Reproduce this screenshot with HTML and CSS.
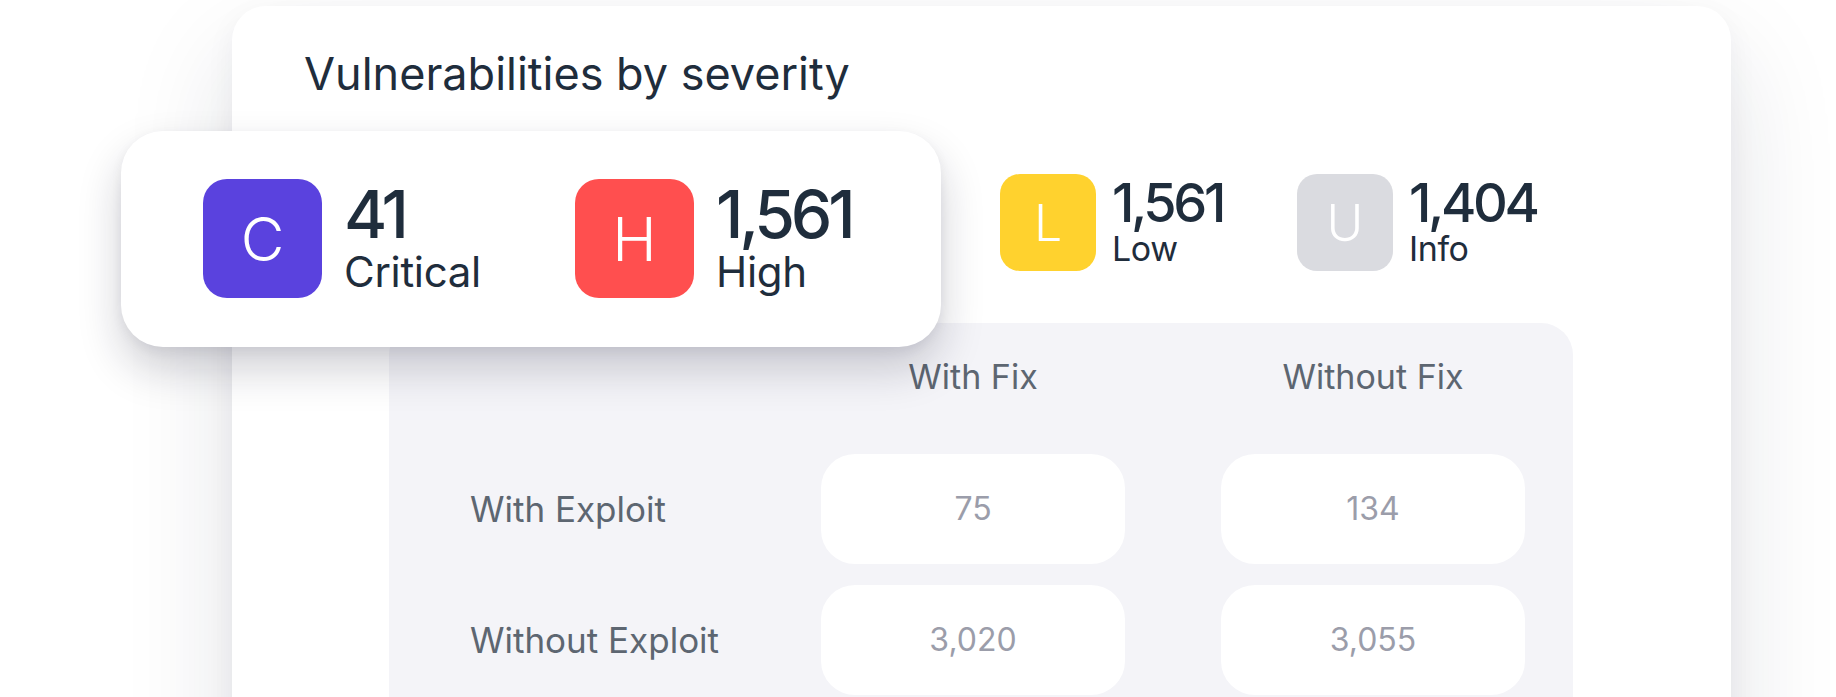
FILE: index.html
```html
<!DOCTYPE html>
<html lang="en">
<head>
<meta charset="utf-8">
<title>Vulnerabilities by severity</title>
<link rel="stylesheet" href="styles.css">
</head>
<body>
<main class="stage">
  <section class="card">
    <h1 class="title">Vulnerabilities by severity</h1>
    <div class="stats">
      <div class="stat stat--low">
        <span class="badge badge--low">L</span>
        <div class="stat__text"><span class="stat__num">1,561</span><span class="stat__label">Low</span></div>
      </div>
      <div class="stat">
        <span class="badge badge--info">U</span>
        <div class="stat__text"><span class="stat__num">1,404</span><span class="stat__label">Info</span></div>
      </div>
    </div>
    <div class="matrix">
      <span></span>
      <span class="matrix__head">With Fix</span>
      <span class="matrix__head">Without Fix</span>
      <span class="matrix__label">With Exploit</span>
      <span class="matrix__cell">75</span>
      <span class="matrix__cell">134</span>
      <span class="matrix__label">Without Exploit</span>
      <span class="matrix__cell">3,020</span>
      <span class="matrix__cell">3,055</span>
    </div>
  </section>
  <div class="zoom-card">
    <div class="stat stat--lg">
      <span class="badge badge--critical">C</span>
      <div class="stat__text"><span class="stat__num">41</span><span class="stat__label">Critical</span></div>
    </div>
    <div class="stat stat--lg">
      <span class="badge badge--high">H</span>
      <div class="stat__text"><span class="stat__num">1,561</span><span class="stat__label">High</span></div>
    </div>
  </div>
</main>
</body>
</html>
```

FILE: styles.css
```css
* { box-sizing: border-box; }

html, body {
  margin: 0;
  padding: 0;
  background: #ffffff;
}

body {
  width: 1836px;
  height: 697px;
  overflow: hidden;
  font-family: "Inter", "Liberation Sans", sans-serif;
  color: #1f2d3c;
}

.stage {
  position: relative;
  padding: 6px 0 0 232px;
}

.card {
  width: 1499px;
  height: 800px;
  background: #ffffff;
  border-radius: 34px;
  padding: 45px 0 0 72px;
  box-shadow: 0 50px 110px rgba(24, 28, 56, 0.13), 0 10px 30px rgba(24, 28, 56, 0.05);
}

.title {
  margin: 0;
  font-size: 45px;
  line-height: 1;
  font-weight: 400;
  letter-spacing: 0;
  color: #1f2d3c;
}

.stats {
  display: grid;
  grid-template-columns: repeat(4, 297px);
  padding-left: 102px;
  margin-top: 78px;
}

.stat--low { grid-column: 3; }

.stat {
  display: flex;
  align-items: flex-start;
  gap: 16px;
}

.badge {
  flex: none;
  width: 96px;
  height: 97px;
  border-radius: 20px;
  display: flex;
  align-items: center;
  justify-content: center;
  color: #ffffff;
  font-size: 50px;
  font-weight: 300;
  line-height: 1;
}

.badge--critical { background: #5a42de; }
.badge--high { background: #ff4f4f; }
.badge--low { background: #ffd22e; }
.badge--info { background: #dadbe0; }

.stat__text {
  display: flex;
  flex-direction: column;
  padding-top: 2px;
}

.stat__num {
  font-size: 54px;
  line-height: 1;
  font-weight: 500;
  letter-spacing: -3.4px;
}

.stat__label {
  font-size: 34px;
  line-height: 1;
  font-weight: 400;
  margin-top: 2px;
  letter-spacing: -0.4px;
}

.matrix {
  margin: 52px 0 0 85px;
  width: 1184px;
  height: 420px;
  background: #f4f4f8;
  border-radius: 32px;
  padding: 37px 48px 0 81px;
  display: grid;
  grid-template-columns: 255px 304px 304px;
  grid-template-rows: 73px 110px 110px;
  column-gap: 96px;
  row-gap: 21px;
  align-content: start;
}

.matrix__head {
  align-self: start;
  font-size: 34px;
  line-height: 1;
  text-align: center;
  color: #5d6671;
}

.matrix__label {
  display: flex;
  align-items: center;
  font-size: 35px;
  line-height: 1;
  color: #5d6671;
}

.matrix__cell {
  display: flex;
  align-items: center;
  justify-content: center;
  background: #ffffff;
  border-radius: 34px;
  font-size: 32px;
  line-height: 1;
  color: #9b9daa;
}

.zoom-card {
  position: absolute;
  left: 121px;
  top: 131px;
  width: 820px;
  height: 216px;
  background: #ffffff;
  border-radius: 42px;
  padding: 48px 0 0 82px;
  display: grid;
  grid-template-columns: 372px 372px;
  box-shadow: 0 22px 44px rgba(20, 22, 44, 0.2), 0 4px 12px rgba(20, 22, 44, 0.06);
}

.stat--lg { gap: 22px; }

.stat--lg .badge {
  width: 119px;
  height: 119px;
  border-radius: 24px;
  font-size: 60px;
}

.stat--lg .stat__text { padding-top: 2px; }

.stat--lg .stat__num {
  font-size: 66px;
  letter-spacing: -4.2px;
}

.stat--lg .stat__label {
  font-size: 42px;
  margin-top: 4px;
  letter-spacing: -0.3px;
}
```
